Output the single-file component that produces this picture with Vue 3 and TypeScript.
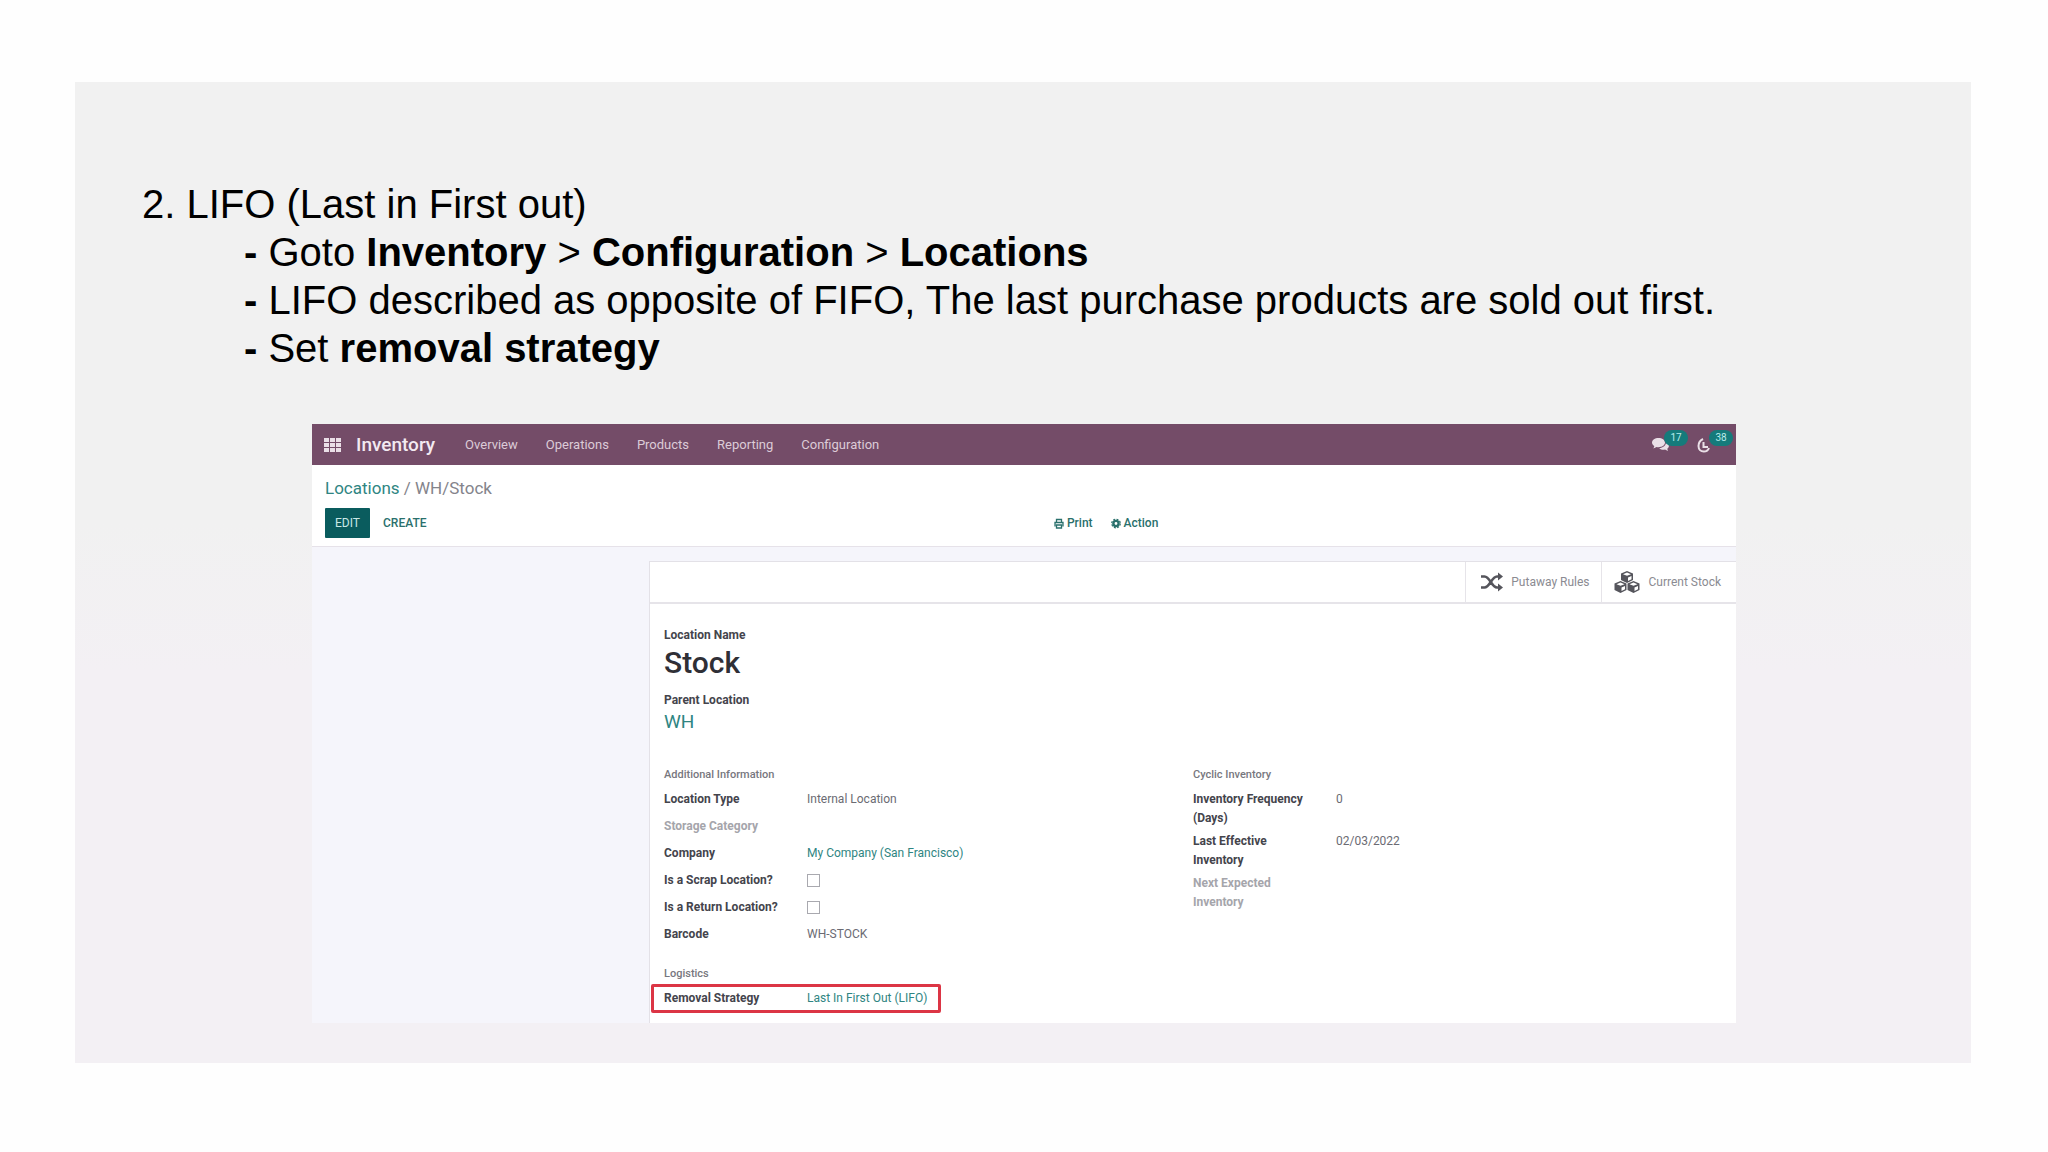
<script setup lang="ts">
interface Field {
  label: string
  value?: string
  link?: boolean
  muted?: boolean
  check?: string
}

const menus: string[] = ['Overview', 'Operations', 'Products', 'Reporting', 'Configuration']

const additional: Field[] = [
  { label: 'Location Type', value: 'Internal Location' },
  { label: 'Storage Category', muted: true },
  { label: 'Company', value: 'My Company (San Francisco)', link: true },
  { label: 'Is a Scrap Location?', check: 'scrap' },
  { label: 'Is a Return Location?', check: 'return' },
  { label: 'Barcode', value: 'WH-STOCK' },
]

const cyclic: Field[] = [
  { label: 'Inventory Frequency (Days)', value: '0' },
  { label: 'Last Effective Inventory', value: '02/03/2022' },
  { label: 'Next Expected Inventory', muted: true },
]
</script>

<template>
  <main class="slide">
    <section class="panel">
      <div class="notes">
        <p>2. LIFO (Last in First out)</p>
        <ul>
          <li><b>- </b>Goto <b>Inventory</b> &gt; <b>Configuration</b> &gt; <b>Locations</b></li>
          <li><b>- </b>LIFO described as opposite of FIFO, The last purchase products are sold out first.</li>
          <li><b>- </b>Set <b>removal strategy</b></li>
        </ul>
      </div>

      <div class="app">
        <nav class="navbar">
          <button class="apps" type="button" aria-label="Apps">
            <svg width="17" height="14" viewBox="0 0 17 14" fill="currentColor">
              <path d="M0 0h5v4H0zM6 0h5v4H6zM12 0h5v4h-5zM0 5h5v4H0zM6 5h5v4H6zM12 5h5v4h-5zM0 10h5v4H0zM6 10h5v4H6zM12 10h5v4h-5z" />
            </svg>
          </button>
          <a class="brand" href="#">Inventory</a>
          <div class="menus">
            <a v-for="m in menus" :key="m" href="#">{{ m }}</a>
          </div>
          <div class="tray">
            <button class="tray-item" type="button" aria-label="Messages">
              <svg width="17" height="15" viewBox="0 0 17 15" fill="currentColor">
                <path d="M6.500 1C3 1 0 3 0 5.600c0 1.500.900 2.700 2.300 3.600L1.400 11.400l3.200-1.300c.6.100 1.200.2 1.900.2 3.600 0 6.500-2.100 6.500-4.700S10.100 1 6.500 1z" />
                <path d="M14 5.600c0 3-3 5.300-6.800 5.600 1.100 1 2.700 1.600 4.400 1.600.5 0 1-.1 1.400-.2l3 1.400-.8-2.200c1-.7 1.700-1.700 1.700-2.800 0-1.400-1.100-2.700-2.900-3.400z" />
              </svg>
              <span class="badge">17</span>
            </button>
            <button class="tray-item" type="button" aria-label="Activities">
              <svg width="14" height="16" viewBox="0 0 14 16" fill="none" stroke="currentColor" stroke-width="2">
                <path d="M6 2C3 3.500 1.500 6 1.500 9c0 3.300 2.300 5.500 5.300 5.500 2.500 0 4.500-1.500 5.200-3.500" />
                <path d="M6.500 5v5H11" />
              </svg>
              <span class="badge">38</span>
            </button>
          </div>
        </nav>

        <header class="control">
          <div class="crumbs"><a href="#">Locations</a> / <span>WH/Stock</span></div>
          <div class="actions">
            <div class="main-actions">
              <button class="edit" type="button">EDIT</button>
              <button class="plain" type="button">CREATE</button>
            </div>
            <div class="side-actions">
              <button class="plain" type="button">
                <svg width="10" height="11" viewBox="0 0 10 11" fill="none" stroke="currentColor">
                  <path d="M2.500 4.500v-3h5v3M1 8.500v-4h8v4M2.500 7h5v3h-5z" stroke-width="1.300" />
                </svg>
                Print
              </button>
              <button class="plain" type="button">
                <svg width="10" height="11" viewBox="0 0 10 11">
                  <circle cx="5" cy="5.500" r="4.300" fill="none" stroke="currentColor" stroke-width="1.200" stroke-dasharray="2 1.380" />
                  <circle cx="5" cy="5.500" r="2.600" fill="none" stroke="currentColor" stroke-width="2.400" />
                </svg>
                Action
              </button>
            </div>
          </div>
        </header>

        <div class="content">
          <article class="sheet">
            <div class="stats">
              <button type="button">
                <svg width="22" height="20" viewBox="0 0 22 20">
                  <g fill="none" stroke="currentColor" stroke-width="2.600">
                    <path d="M0 4.500h3.500c5.500 0 7 11 12.500 11h1.500M0 15.500h3.500c5.500 0 7-11 12.500-11h1.500" />
                  </g>
                  <path d="M17 .5l5 4-5 4zM17 11.500l5 4-5 4z" fill="currentColor" />
                </svg>
                Putaway Rules
              </button>
              <button type="button">
                <svg width="28" height="24" viewBox="0 0 28 24">
                  <path d="M14 1l6 2.500v6.500l-6 3-6-3V3.500zM7.500 11l6 2.500V20l-6 3-6-3v-6.500zM20.500 11l6 2.500V20l-6 3-6-3v-6.500z" fill="currentColor" />
                  <path d="M14 2.600l4 1.600-4 1.600-4-1.600zM15 7.500l3.500-1.500v3.200L15 11zM7.500 12.600l4 1.600-4 1.600-4-1.600zM8.500 17.500L12 16v3.200L8.500 21zM20.500 12.600l4 1.600-4 1.600-4-1.600zM21.500 17.500L25 16v3.200L21.500 21z" fill="#fff" />
                </svg>
                Current Stock
              </button>
            </div>

            <div class="body">
              <div class="caption">Location Name</div>
              <h1>Stock</h1>
              <div class="caption">Parent Location</div>
              <a class="parent" href="#">WH</a>

              <div class="groups">
                <section>
                  <h2>Additional Information</h2>
                  <div v-for="f in additional" :key="f.label" class="field">
                    <label v-if="f.check" class="name" :for="f.check">{{ f.label }}</label>
                    <span v-else class="name" :class="{ muted: f.muted }">{{ f.label }}</span>
                    <input v-if="f.check" :id="f.check" type="checkbox" />
                    <a v-else-if="f.link" href="#">{{ f.value }}</a>
                    <span v-else>{{ f.value }}</span>
                  </div>
                  <h2 class="second">Logistics</h2>
                  <div class="field marked">
                    <span class="name">Removal Strategy</span>
                    <a href="#">Last In First Out (LIFO)</a>
                  </div>
                </section>
                <section class="tight">
                  <h2>Cyclic Inventory</h2>
                  <div v-for="f in cyclic" :key="f.label" class="field">
                    <span class="name" :class="{ muted: f.muted }">{{ f.label }}</span>
                    <span>{{ f.value }}</span>
                  </div>
                </section>
              </div>
            </div>
          </article>
        </div>
      </div>
    </section>
  </main>
</template>

<style>
body {
  margin: 0;
  background: #fefefe;
}
</style>

<style scoped>
* {
  box-sizing: border-box;
}

.slide {
  padding: 82px 77px 88px 75px;
}

.panel {
  padding: 98px 235px 40px 237px;
  background: linear-gradient(#f1f1f1 45%, #f3f0f4 60%);
}

.notes {
  margin: 0 -170px 52px;
  font: 40px/48px "Liberation Sans", Arial, sans-serif;
  color: #000;
}

.notes p,
.notes ul {
  margin: 0;
  padding: 0;
}

.notes ul {
  padding-left: 102px;
  list-style: none;
}

.app {
  font: 12px/19px Roboto, "Noto Sans", sans-serif;
  color: #6b6b73;
  background: #fff;
}

a {
  color: #2f8582;
  text-decoration: none;
}

button {
  display: flex;
  align-items: center;
  padding: 0;
  border: 0;
  background: none;
  color: inherit;
  font: inherit;
}

.navbar {
  display: flex;
  align-items: center;
  height: 41px;
  padding: 0 12px;
  background: #744c68;
  color: #eadfe7;
}

.navbar a {
  color: #dccbd7;
}

.navbar .brand {
  margin: 0 30px 0 15px;
  font-size: 19px;
  font-weight: 500;
  color: #f3eaf1;
}

.menus {
  display: flex;
  gap: 28px;
  font-size: 13px;
}

.tray {
  display: flex;
  gap: 28px;
  margin: 0 13px 0 auto;
}

.tray-item {
  position: relative;
}

.badge {
  position: absolute;
  top: -7px;
  left: 12px;
  width: 24px;
  height: 16px;
  border-radius: 8px;
  background: #157b7b;
  color: #b9ecea;
  font-size: 10px;
  line-height: 16px;
  text-align: center;
}

.control {
  height: 82px;
  padding: 12px 13px 0;
  border-bottom: 1px solid #e6e2e9;
}

.crumbs {
  margin-bottom: 9px;
  font-size: 17px;
  line-height: 22px;
  color: #84848b;
}

.actions {
  display: grid;
  grid-template-columns: 52fr 48fr;
  color: #2a706c;
}

.main-actions,
.side-actions {
  display: flex;
  align-items: center;
}

.main-actions {
  gap: 13px;
}

.side-actions {
  gap: 18px;
  padding-left: 2px;
}

.edit {
  justify-content: center;
  width: 45px;
  height: 30px;
  border-radius: 1px;
  background: #0a5c5e;
  color: #c9e8e6;
}

.plain {
  gap: 3px;
  font-weight: 500;
}

.content {
  padding: 14px 0 0 337px;
  background: #f5f5fb;
}

.sheet {
  border: solid #e3e1e7;
  border-width: 1px 0 0 1px;
  background: #fff;
}

.stats {
  display: flex;
  justify-content: flex-end;
  height: 42px;
  border-bottom: 2px solid #e6e4e9;
}

.stats button {
  gap: 8px;
  padding: 0 15px 0 11px;
  border-left: 1px solid #e6e4e9;
  color: #8b8b92;
}

.stats button:first-child {
  padding: 0 11px 0 15px;
}

.stats svg {
  color: #55555c;
}

.body {
  padding: 22px 14px 11px;
}

.caption,
.name {
  font-weight: 700;
  color: #44444c;
}

h1 {
  margin: 0 0 10px;
  font-size: 30px;
  font-weight: 500;
  line-height: 36px;
  color: #2f2f36;
}

.parent {
  display: block;
  font-size: 19px;
  line-height: 24px;
}

.groups {
  display: grid;
  grid-template-columns: 1fr 1fr;
  margin-top: 31px;
}

h2 {
  margin: 0 0 2px;
  font-size: 11px;
  font-weight: 500;
  line-height: 19px;
  color: #77777e;
}

.second {
  margin-top: 16px;
}

.field {
  display: grid;
  grid-template-columns: 122px auto;
  column-gap: 21px;
  align-items: center;
  justify-content: start;
  min-height: 27px;
}

.muted {
  color: #a5a5ab;
}

.marked {
  position: relative;
}

.marked::before {
  content: "";
  position: absolute;
  inset: -1px auto -1px -13px;
  width: 284px;
  border: 3px solid #dc3545;
  border-radius: 2px;
}

.tight .field {
  align-items: start;
  padding: 4px 0 0;
}

.field input {
  appearance: none;
  width: 13px;
  height: 13px;
  margin: 0;
  border: 1px solid #a9a9af;
  background: #fff;
}
</style>
